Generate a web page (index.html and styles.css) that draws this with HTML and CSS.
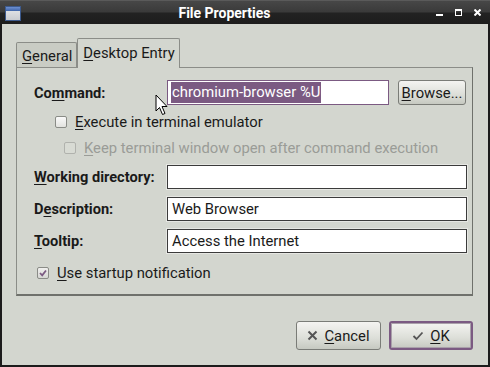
FILE: index.html
```html
<!DOCTYPE html>
<html lang="en">
<head>
<meta charset="UTF-8" />
<title>File Properties</title>
<link rel="stylesheet" href="styles.css">
</head>
<body>
  <div class="window">
    <div class="titlebar">
      <div class="app-icon"><div class="app-icon-top"></div></div>
      <div class="title">File Properties</div>
      <div class="controls">
        <span class="ctl-min"></span>
        <span class="ctl-max"></span>
        <svg class="ctl-close" width="7" height="7" viewBox="0 0 7 7">
          <path d="M0.5 0.5 L6.5 6.5 M6.5 0.5 L0.5 6.5" stroke="#fff" stroke-width="2"/>
        </svg>
      </div>
    </div>

    <div class="content">
      <div class="tabs">
        <div class="tab"><u>G</u>eneral</div>
        <div class="tab active"><u>D</u>esktop Entry</div>
      </div>

      <div class="frame">
        <div class="row cmd-row">
          <label class="label">Co<u>m</u>mand:</label>
          <div class="entry focus"><span class="selected">chromium-browser %U</span></div>
          <button class="btn browse"><u>B</u>rowse...</button>
        </div>

        <div class="row check-row">
          <span class="check"></span>
          <span><u>E</u>xecute in terminal emulator</span>
        </div>

        <div class="row check-row sub disabled">
          <span class="check"></span>
          <span><u>K</u>eep terminal window open after command execution</span>
        </div>

        <div class="row field-row first">
          <label class="label"><u>W</u>orking directory:</label>
          <div class="entry"></div>
        </div>

        <div class="row field-row">
          <label class="label">D<u>e</u>scription:</label>
          <div class="entry">Web Browser</div>
        </div>

        <div class="row field-row">
          <label class="label"><u>T</u>ooltip:</label>
          <div class="entry">Access the Internet</div>
        </div>

        <div class="row check-row startup">
          <span class="check checked">
            <svg width="10" height="10" viewBox="0 0 10 10">
              <path d="M2 5 L4.2 7.3 L8 2.5" fill="none" stroke="#7b5a82" stroke-width="1.8"/>
            </svg>
          </span>
          <span><u>U</u>se startup notification</span>
        </div>
      </div>

      <div class="buttons">
        <button class="btn dlg">
          <svg width="11" height="11" viewBox="0 0 11 11">
            <path d="M1.5 1.5 L9.5 9.5 M9.5 1.5 L1.5 9.5" stroke="#555" stroke-width="2"/>
          </svg>
          <span><u>C</u>ancel</span>
        </button>
        <button class="btn dlg default">
          <svg width="12" height="10" viewBox="0 0 12 10">
            <path d="M1.5 5 L4.5 8 L10.5 1.5" fill="none" stroke="#555" stroke-width="1.8"/>
          </svg>
          <span><u>O</u>K</span>
        </button>
      </div>
    </div>

    <!-- mouse pointer over the dialog -->
    <svg class="pointer" width="13" height="22" viewBox="0 0 13 22">
      <path d="M1 1 L1 17 L4.5 13.5 L7.5 20.5 L10 19.5 L7 12.5 L12 12.5 Z" fill="#fff" stroke="#000" stroke-width="1"/>
    </svg>
  </div>
</body>
</html>
```

FILE: styles.css
```css
body {
  margin: 0;
  background: #1c1c1c;
  font-family: Roboto, "Liberation Sans", sans-serif;
  font-size: 14.8px;
  color: #1a1a1a;
}

u {
  text-decoration: underline;
  text-underline-offset: 2px;
}

/* Window frame */
.window {
  position: relative;
  width: 490px;
  height: 367px;
  box-sizing: border-box;
  background: #d3d6cf;
  border: 2px solid #1c1c1c;
  border-top: none;
  display: flex;
  flex-direction: column;
}

.titlebar {
  height: 24px;
  margin: 0 -2px;
  background: linear-gradient(#474747 0, #3a3a3a 48%, #222 52%, #1d1d1d 100%);
  border-top: 1px solid #5a5a5a;
  box-sizing: border-box;
  display: flex;
  align-items: center;
  padding-left: 5px;
  color: #fff;
}
.app-icon {
  width: 16px;
  height: 15px;
  background: linear-gradient(#e8e9ec, #c9cbd0);
  border: 1px solid #3d5a8c;
  box-sizing: border-box;
  margin-top: 1px;
}
.app-icon-top {
  height: 4px;
  background: linear-gradient(#6d8fd0, #3f64a8);
}
.title {
  flex: 1;
  text-align: center;
  font-weight: 700;
  font-size: 14px;
  padding-right: 8px;
  padding-top: 1px;
}
.controls {
  display: flex;
  align-items: center;
  gap: 12px;
  padding-right: 9px;
  height: 100%;
}
.ctl-min {
  width: 7px;
  height: 2px;
  background: #fff;
  margin-top: 5px;
}
.ctl-max {
  width: 5px;
  height: 4px;
  border: 1px solid #fff;
  border-top-width: 2px;
}
.ctl-close {
  display: block;
}

.content {
  flex: 1;
  padding: 14px 15px 0 14px;
  display: flex;
  flex-direction: column;
}

/* Notebook tabs */
.tabs {
  display: flex;
  align-items: flex-end;
  height: 29px;
}
.tab {
  height: 25px;
  padding: 0 4px 0 5px;
  box-sizing: border-box;
  border: 1px solid #8b8d88;
  border-bottom: none;
  border-radius: 2px 2px 0 0;
  background: #c9ccc4;
  line-height: 26px;
}
.tab.active {
  height: 30px;
  margin-bottom: -1px;
  padding: 0 4px 0 5px;
  background: #d3d6cf;
  line-height: 28px;
  position: relative;
  z-index: 1;
}

.frame {
  height: 229px;
  box-sizing: border-box;
  border: 1px solid #8b8d88;
  border-right-color: #6f716c;
  border-bottom: 2px solid #6f716c;
  padding: 12px 5px 0 17px;
}

.row {
  display: flex;
  align-items: center;
  height: 24px;
}
.label {
  width: 133px;
  font-weight: 700;
  font-size: 14.6px;
}

.entry {
  flex: 1;
  height: 24px;
  box-sizing: border-box;
  background: #fff;
  border: 1px solid #3b3b3b;
  box-shadow: 0 0 0 1px #e6e7e3;
  padding: 0 4px;
  line-height: 22px;
}
.entry.focus {
  border-color: #7b5a82;
  box-shadow: none;
  height: 25px;
  line-height: 23px;
  padding-left: 3px;
  flex: 0 0 222px;
}
.selected {
  background: #7b5a82;
  color: #fff;
  padding: 1px 1px 2px 1px;
}

.cmd-row {
  height: 25px;
}

.btn {
  font-family: inherit;
  font-size: 14.8px;
  color: #1a1a1a;
  background: linear-gradient(#f4f4f1, #dcded8 60%, #c6c9c1);
  border: 1px solid #7a7c77;
  border-radius: 3px;
  padding: 0;
}
.browse {
  width: 68px;
  height: 25px;
  margin-left: 9px;
}

.check-row {
  margin-top: 5px;
  padding-left: 21px;
  gap: 8px;
}
.check-row.sub {
  margin-top: 2px;
  padding-left: 30px;
}
.check {
  width: 12px;
  height: 12px;
  box-sizing: border-box;
  border: 1px solid #8a8c87;
  border-radius: 2px;
  background: linear-gradient(#fafafa, #e2e3df);
  display: flex;
  align-items: center;
  justify-content: center;
}
.check svg {
  display: block;
}
.disabled {
  color: #9a9c97;
}
.disabled .check {
  border-color: #b0b2ad;
  background: #d8dbd4;
}

.field-row {
  margin-top: 8px;
}
.field-row.first {
  margin-top: 5px;
}

.check-row.startup {
  margin-top: 8px;
  padding-left: 3px;
  gap: 8px;
}
.check.checked {
  background: linear-gradient(#f0f0ee, #d6d7d3);
}

/* Dialog buttons */
.buttons {
  display: flex;
  justify-content: flex-end;
  gap: 8px;
  margin-top: 25px;
}
.dlg {
  width: 85px;
  height: 29px;
  display: flex;
  align-items: center;
  justify-content: center;
  gap: 6px;
}
.dlg.default {
  width: 84px;
  border: 2px solid #7b5a82;
  box-shadow: inset 0 0 0 1px #a9a0aa;
}

.pointer {
  position: absolute;
  left: 153px;
  top: 94px;
}
```
